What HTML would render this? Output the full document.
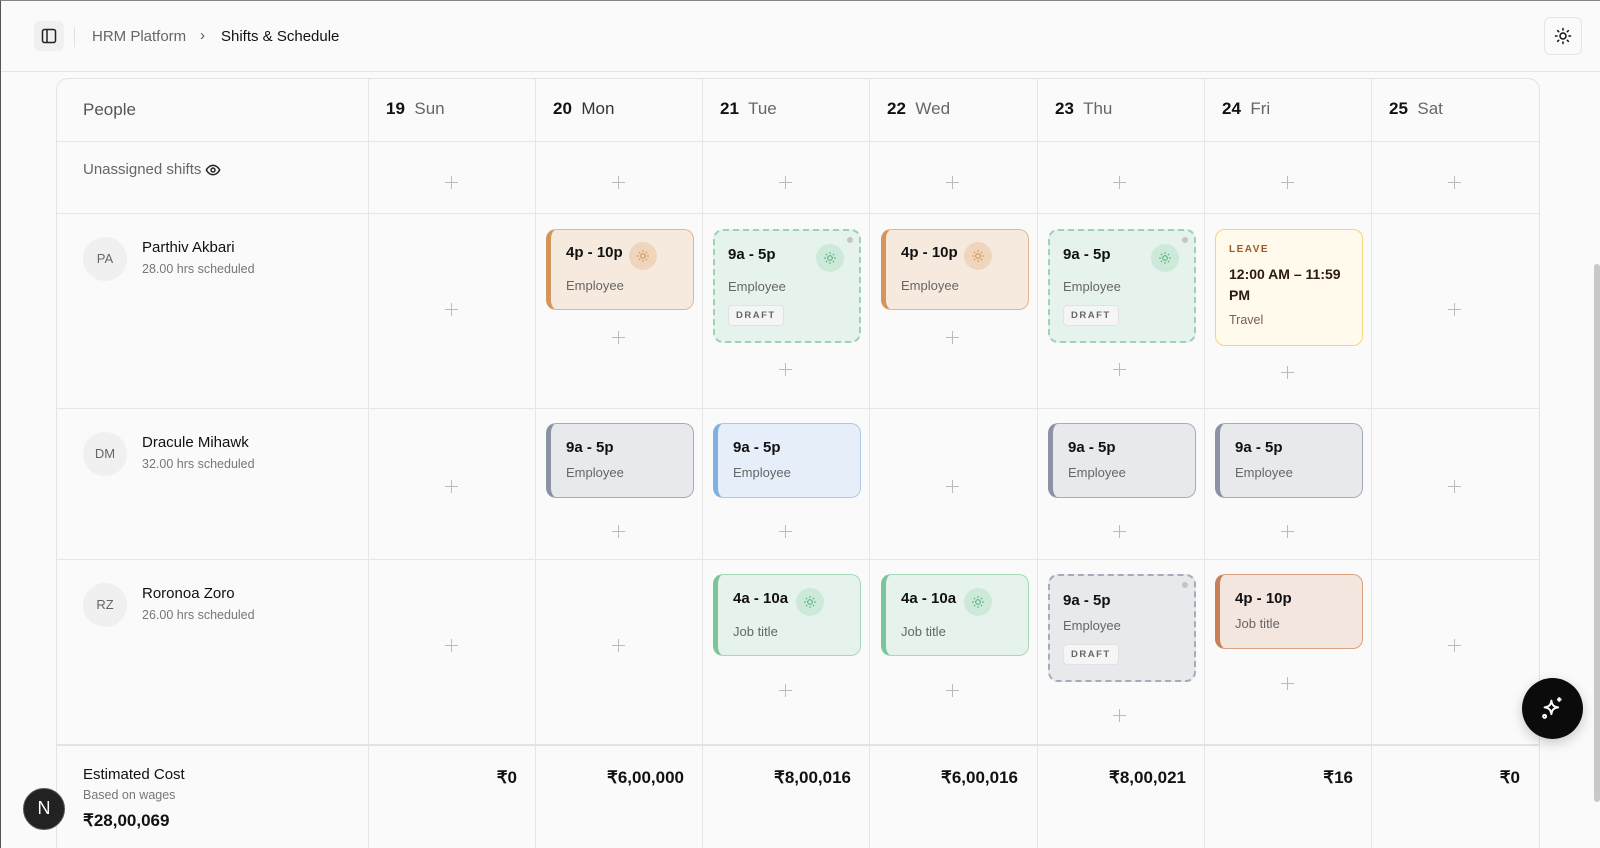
<!DOCTYPE html>
<html style="overflow:hidden;height:848px"><head><meta charset="utf-8"><style>
*{box-sizing:border-box;margin:0;padding:0}
body{width:1600px;height:848px;overflow:hidden;background:#fafafa;font-family:"Liberation Sans",sans-serif;color:#111;position:relative;border-left:1px solid #555;border-top:1px solid #888}
.a{position:absolute}
.hdr{left:0;top:0;width:1600px;height:71px;border-bottom:1px solid #e5e5e5;background:#fafafa}
.tbl{left:55px;top:77px;width:1484px;height:790px;border:1px solid #e3e3e3;border-radius:12px;background:#fafafa;overflow:hidden}
.vl{width:1px;background:#e6e6e6;top:0;height:800px}
.hl{height:1px;background:#e6e6e6;left:0;width:1484px}
.plus{width:14px;height:14px}
.plus:before,.plus:after{content:"";position:absolute;background:#bbb}
.plus:before{left:6px;top:0;width:1px;height:13px}
.plus:after{top:6px;left:0;width:13px;height:1px}
.card{border-radius:10px;overflow:hidden}
.t{font-size:15px;font-weight:bold;color:#111}
.s{font-size:13px;color:#666}
.sun{width:28px;height:28px;border-radius:50%}
.draft{font-size:9.5px;font-weight:bold;letter-spacing:1.5px;color:#666;background:#f5f5f5;border:1px solid #e2e2e2;border-radius:4px;padding:4px 7px}
.dot{width:6px;height:6px;border-radius:50%;background:#c4c4c4}
.amt{font-size:17px;font-weight:bold;color:#111;text-align:right;width:140px}
</style></head><body>
<div class="a hdr"></div>
<div class="a" style="left:33px;top:20px;width:30px;height:30px;background:#f0f0f0;border-radius:6px"></div>
<svg class="a" style="left:40px;top:27px" width="16" height="16" viewBox="0 0 16 16" fill="none" stroke="#222" stroke-width="1.5"><rect x="1.5" y="1.5" width="13" height="13" rx="2"/><line x1="6" y1="1.5" x2="6" y2="14.5"/></svg>
<div class="a" style="left:73px;top:26px;width:1px;height:20px;background:#e2e2e2"></div>
<div class="a" style="left:91px;top:27px;font-size:15px;color:#666">HRM Platform</div>
<div class="a" style="left:199px;top:26px;font-size:15px;color:#555">›</div>
<div class="a" style="left:220px;top:27px;font-size:15px;color:#111">Shifts &amp; Schedule</div>
<div class="a" style="left:1543px;top:16px;width:38px;height:38px;border:1px solid #e5e5e5;border-radius:6px;background:#fafafa"></div>
<svg class="a" style="left:1553px;top:26px" width="18" height="18" viewBox="0 0 24 24" fill="none" stroke="#111" stroke-width="2" stroke-linecap="round"><circle cx="12" cy="12" r="4"/><path d="M12 2v2M12 20v2M4.9 4.9l1.4 1.4M17.7 17.7l1.4 1.4M2 12h2M20 12h2M4.9 19.1l1.4-1.4M17.7 6.3l1.4-1.4"/></svg>

<div class="a tbl">
  <div class="a vl" style="left:311px"></div>
  <div class="a vl" style="left:478px"></div>
  <div class="a vl" style="left:645px"></div>
  <div class="a vl" style="left:812px"></div>
  <div class="a vl" style="left:980px"></div>
  <div class="a vl" style="left:1147px"></div>
  <div class="a vl" style="left:1314px"></div>
  <div class="a hl" style="top:62px"></div>
  <div class="a hl" style="top:134px"></div>
  <div class="a hl" style="top:329px"></div>
  <div class="a hl" style="top:480px"></div>
  <div class="a hl" style="top:665px;height:2px;background:#e3e3e3"></div>

  <div class="a" style="left:26px;top:21px;font-size:17px;color:#555">People</div>
  <div class="a" style="left:329px;top:20px;font-size:17px"><b>19</b>&nbsp; <span style="color:#666">Sun</span></div>
  <div class="a" style="left:496px;top:20px;font-size:17px"><b>20</b>&nbsp; <span style="color:#333">Mon</span></div>
  <div class="a" style="left:663px;top:20px;font-size:17px"><b>21</b>&nbsp; <span style="color:#666">Tue</span></div>
  <div class="a" style="left:830px;top:20px;font-size:17px"><b>22</b>&nbsp; <span style="color:#666">Wed</span></div>
  <div class="a" style="left:998px;top:20px;font-size:17px"><b>23</b>&nbsp; <span style="color:#666">Thu</span></div>
  <div class="a" style="left:1165px;top:20px;font-size:17px"><b>24</b>&nbsp; <span style="color:#666">Fri</span></div>
  <div class="a" style="left:1332px;top:20px;font-size:17px"><b>25</b>&nbsp; <span style="color:#666">Sat</span></div>

  <div class="a" style="left:26px;top:82px;font-size:15px;color:#666">Unassigned shifts</div>
  <svg class="a" style="left:148px;top:83px" width="16" height="16" viewBox="0 0 24 24" fill="none" stroke="#222" stroke-width="2.2"><path d="M2 12s3.5-7 10-7 10 7 10 7-3.5 7-10 7S2 12 2 12z"/><circle cx="12" cy="12" r="3"/></svg>
  <div class="a plus" style="left:388px;top:97px"></div><div class="a plus" style="left:555px;top:97px"></div><div class="a plus" style="left:722px;top:97px"></div><div class="a plus" style="left:889px;top:97px"></div><div class="a plus" style="left:1056px;top:97px"></div><div class="a plus" style="left:1224px;top:97px"></div><div class="a plus" style="left:1391px;top:97px"></div>

  <div class="a" style="left:26px;top:158px;width:44px;height:44px;border-radius:50%;background:#f0f0f0;font-size:13px;color:#666;text-align:center;line-height:44px">PA</div>
  <div class="a" style="left:85px;top:160px;font-size:15px">Parthiv Akbari</div>
  <div class="a" style="left:85px;top:183px;font-size:12.5px;color:#777">28.00 hrs scheduled</div>
  <div class="a" style="left:26px;top:353px;width:44px;height:44px;border-radius:50%;background:#f0f0f0;font-size:13px;color:#666;text-align:center;line-height:44px">DM</div>
  <div class="a" style="left:85px;top:355px;font-size:15px">Dracule Mihawk</div>
  <div class="a" style="left:85px;top:378px;font-size:12.5px;color:#777">32.00 hrs scheduled</div>
  <div class="a" style="left:26px;top:504px;width:44px;height:44px;border-radius:50%;background:#f0f0f0;font-size:13px;color:#666;text-align:center;line-height:44px">RZ</div>
  <div class="a" style="left:85px;top:506px;font-size:15px">Roronoa Zoro</div>
  <div class="a" style="left:85px;top:529px;font-size:12.5px;color:#777">26.00 hrs scheduled</div>

  <div class="a plus" style="left:388px;top:224px"></div>
  <div class="a card" style="left:489px;top:150px;width:148px;height:81px;background:#f6eadf;border:1px solid #e4b690;border-left:5px solid #d4955c">
    <div class="a t" style="left:15px;top:14px">4p - 10p</div>
    <div class="a sun" style="left:78px;top:12px;background:#efd5bc"></div><svg class="a" style="left:85px;top:19px" width="14" height="14" viewBox="0 0 24 24" fill="none" stroke="#d8955a" stroke-width="2"><circle cx="12" cy="12" r="4"/><path d="M12 2v3M12 19v3M2 12h3M19 12h3M5 5l2 2M17 17l2 2M5 19l2-2M17 7l2-2"/></svg>
    <div class="a s" style="left:15px;top:48px">Employee</div>
  </div>
  <div class="a plus" style="left:555px;top:252px"></div>

  <div class="a card" style="left:656px;top:150px;width:148px;height:114px;background:#e6f3ec;border:2px dashed #9ed2b3">
    <div class="a t" style="left:13px;top:15px">9a - 5p</div>
    <div class="a dot" style="left:132px;top:6px"></div>
    <div class="a sun" style="left:101px;top:13px;background:#cde9d9"></div><svg class="a" style="left:108px;top:20px" width="14" height="14" viewBox="0 0 24 24" fill="none" stroke="#5bb484" stroke-width="2"><circle cx="12" cy="12" r="4"/><path d="M12 2v3M12 19v3M2 12h3M19 12h3M5 5l2 2M17 17l2 2M5 19l2-2M17 7l2-2"/></svg>
    <div class="a s" style="left:13px;top:48px">Employee</div>
    <div class="a draft" style="left:13px;top:74px">DRAFT</div>
  </div>
  <div class="a plus" style="left:722px;top:284px"></div>

  <div class="a card" style="left:824px;top:150px;width:148px;height:81px;background:#f6eadf;border:1px solid #e4b690;border-left:5px solid #d4955c">
    <div class="a t" style="left:15px;top:14px">4p - 10p</div>
    <div class="a sun" style="left:78px;top:12px;background:#efd5bc"></div><svg class="a" style="left:85px;top:19px" width="14" height="14" viewBox="0 0 24 24" fill="none" stroke="#d8955a" stroke-width="2"><circle cx="12" cy="12" r="4"/><path d="M12 2v3M12 19v3M2 12h3M19 12h3M5 5l2 2M17 17l2 2M5 19l2-2M17 7l2-2"/></svg>
    <div class="a s" style="left:15px;top:48px">Employee</div>
  </div>
  <div class="a plus" style="left:889px;top:252px"></div>

  <div class="a card" style="left:991px;top:150px;width:148px;height:114px;background:#e6f3ec;border:2px dashed #9ed2b3">
    <div class="a t" style="left:13px;top:15px">9a - 5p</div>
    <div class="a dot" style="left:132px;top:6px"></div>
    <div class="a sun" style="left:101px;top:13px;background:#cde9d9"></div><svg class="a" style="left:108px;top:20px" width="14" height="14" viewBox="0 0 24 24" fill="none" stroke="#5bb484" stroke-width="2"><circle cx="12" cy="12" r="4"/><path d="M12 2v3M12 19v3M2 12h3M19 12h3M5 5l2 2M17 17l2 2M5 19l2-2M17 7l2-2"/></svg>
    <div class="a s" style="left:13px;top:48px">Employee</div>
    <div class="a draft" style="left:13px;top:74px">DRAFT</div>
  </div>
  <div class="a plus" style="left:1056px;top:284px"></div>

  <div class="a card" style="left:1158px;top:150px;width:148px;height:117px;background:#fffaec;border:1.5px solid #f4d57a">
    <div class="a" style="left:13px;top:14px;font-size:10px;font-weight:bold;letter-spacing:1.5px;color:#9a5a2a">LEAVE</div>
    <div class="a" style="left:13px;top:34px;font-size:14px;font-weight:bold;color:#2a1a10;line-height:21px;width:125px">12:00 AM – 11:59 PM</div>
    <div class="a" style="left:13px;top:83px;font-size:12.5px;color:#7a6050">Travel</div>
  </div>
  <div class="a plus" style="left:1224px;top:287px"></div>
  <div class="a plus" style="left:1391px;top:224px"></div>

  <div class="a plus" style="left:388px;top:401px"></div>
  <div class="a card" style="left:489px;top:344px;width:148px;height:75px;background:#e8e9ed;border:1px solid #a5abb8;border-left:5px solid #8a92a3">
    <div class="a t" style="left:15px;top:15px">9a - 5p</div><div class="a s" style="left:15px;top:41px">Employee</div></div>
  <div class="a plus" style="left:555px;top:446px"></div>
  <div class="a card" style="left:656px;top:344px;width:148px;height:75px;background:#e5eef9;border:1px solid #a9c8ea;border-left:5px solid #7eb0e2">
    <div class="a t" style="left:15px;top:15px">9a - 5p</div><div class="a s" style="left:15px;top:41px">Employee</div></div>
  <div class="a plus" style="left:722px;top:446px"></div>
  <div class="a plus" style="left:889px;top:401px"></div>
  <div class="a card" style="left:991px;top:344px;width:148px;height:75px;background:#e8e9ed;border:1px solid #a5abb8;border-left:5px solid #8a92a3">
    <div class="a t" style="left:15px;top:15px">9a - 5p</div><div class="a s" style="left:15px;top:41px">Employee</div></div>
  <div class="a plus" style="left:1056px;top:446px"></div>
  <div class="a card" style="left:1158px;top:344px;width:148px;height:75px;background:#e8e9ed;border:1px solid #a5abb8;border-left:5px solid #8a92a3">
    <div class="a t" style="left:15px;top:15px">9a - 5p</div><div class="a s" style="left:15px;top:41px">Employee</div></div>
  <div class="a plus" style="left:1224px;top:446px"></div>
  <div class="a plus" style="left:1391px;top:401px"></div>

  <div class="a plus" style="left:388px;top:560px"></div>
  <div class="a plus" style="left:555px;top:560px"></div>
  <div class="a card" style="left:656px;top:495px;width:148px;height:82px;background:#e6f3ec;border:1px solid #a5d8b8;border-left:5px solid #7cc49a">
    <div class="a t" style="left:15px;top:15px">4a - 10a</div>
    <div class="a sun" style="left:78px;top:13px;background:#cde9d9"></div><svg class="a" style="left:85px;top:20px" width="14" height="14" viewBox="0 0 24 24" fill="none" stroke="#5bb484" stroke-width="2"><circle cx="12" cy="12" r="4"/><path d="M12 2v3M12 19v3M2 12h3M19 12h3M5 5l2 2M17 17l2 2M5 19l2-2M17 7l2-2"/></svg>
    <div class="a s" style="left:15px;top:49px">Job title</div></div>
  <div class="a plus" style="left:722px;top:605px"></div>
  <div class="a card" style="left:824px;top:495px;width:148px;height:82px;background:#e6f3ec;border:1px solid #a5d8b8;border-left:5px solid #7cc49a">
    <div class="a t" style="left:15px;top:15px">4a - 10a</div>
    <div class="a sun" style="left:78px;top:13px;background:#cde9d9"></div><svg class="a" style="left:85px;top:20px" width="14" height="14" viewBox="0 0 24 24" fill="none" stroke="#5bb484" stroke-width="2"><circle cx="12" cy="12" r="4"/><path d="M12 2v3M12 19v3M2 12h3M19 12h3M5 5l2 2M17 17l2 2M5 19l2-2M17 7l2-2"/></svg>
    <div class="a s" style="left:15px;top:49px">Job title</div></div>
  <div class="a plus" style="left:889px;top:605px"></div>
  <div class="a card" style="left:991px;top:495px;width:148px;height:108px;background:#e8e9ed;border:2px dashed #a5abb8">
    <div class="a t" style="left:13px;top:16px">9a - 5p</div>
    <div class="a dot" style="left:132px;top:6px"></div>
    <div class="a s" style="left:13px;top:42px">Employee</div>
    <div class="a draft" style="left:13px;top:68px">DRAFT</div></div>
  <div class="a plus" style="left:1056px;top:630px"></div>
  <div class="a card" style="left:1158px;top:495px;width:148px;height:75px;background:#f3e6df;border:1px solid #d9a07e;border-left:5px solid #c88056">
    <div class="a t" style="left:15px;top:15px">4p - 10p</div><div class="a s" style="left:15px;top:41px">Job title</div></div>
  <div class="a plus" style="left:1224px;top:598px"></div>
  <div class="a plus" style="left:1391px;top:560px"></div>

  <div class="a" style="left:26px;top:687px;font-size:15px;color:#111">Estimated Cost</div>
  <div class="a" style="left:26px;top:709px;font-size:12.5px;color:#777">Based on wages</div>
  <div class="a" style="left:26px;top:732px;font-size:17px;font-weight:bold">₹28,00,069</div>
  <div class="a amt" style="left:320px;top:689px">₹0</div>
  <div class="a amt" style="left:487px;top:689px">₹6,00,000</div>
  <div class="a amt" style="left:654px;top:689px">₹8,00,016</div>
  <div class="a amt" style="left:821px;top:689px">₹6,00,016</div>
  <div class="a amt" style="left:989px;top:689px">₹8,00,021</div>
  <div class="a amt" style="left:1156px;top:689px">₹16</div>
  <div class="a amt" style="left:1323px;top:689px">₹0</div>
</div>

<div class="a" style="left:1593px;top:263px;width:6px;height:538px;background:#c8c8c8;border-radius:3px"></div>
<div class="a" style="left:1521px;top:677px;width:61px;height:61px;border-radius:50%;background:#0b0b0b;box-shadow:0 4px 12px rgba(0,0,0,.2)"></div>
<svg class="a" style="left:1538px;top:694px" width="27" height="27" viewBox="0 0 24 24" fill="none" stroke="#fff" stroke-width="1.8" stroke-linejoin="round"><path d="M11 5c.6 4 2 5.4 6 6-4 .6-5.4 2-6 6-.6-4-2-5.4-6-6 4-.6 5.4-2 6-6z"/><path d="M18 2v4M16 4h4"/><circle cx="5" cy="19" r="1.3"/></svg>
<div class="a" style="left:22px;top:787px;width:42px;height:42px;border-radius:50%;background:#222;border:1.5px solid #555;color:#fff;font-size:18px;text-align:center;line-height:39px">N</div>
</body></html>
